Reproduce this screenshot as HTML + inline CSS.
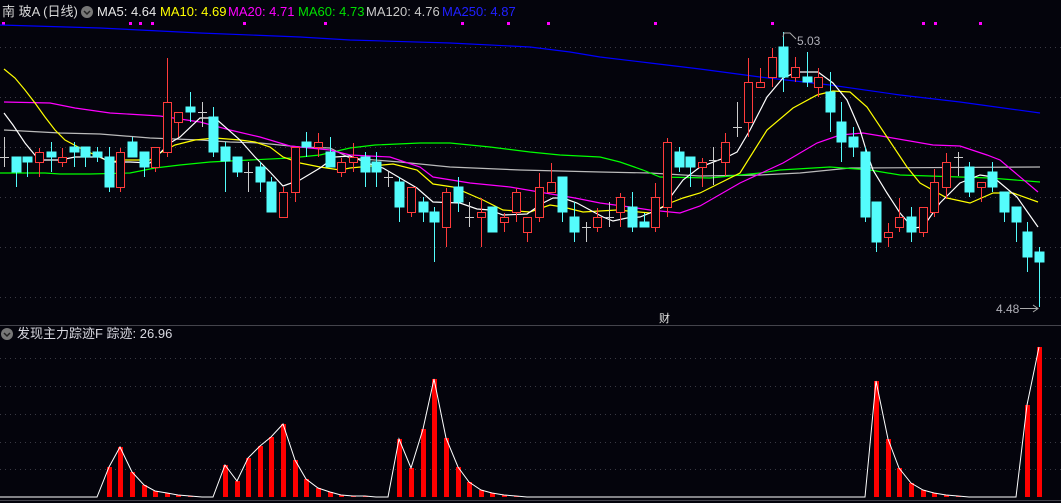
<!DOCTYPE html>
<html><head><meta charset="utf-8"><style>
html,body{margin:0;padding:0;background:#04040c;width:1061px;height:503px;overflow:hidden}
svg{display:block}
text{font-family:"Liberation Sans","Noto Sans CJK SC",sans-serif}
</style></head><body>
<svg width="1061" height="503" viewBox="0 0 1061 503" xmlns="http://www.w3.org/2000/svg">
<rect width="1061" height="503" fill="#04040c"/>
<g stroke="#3a3a44" stroke-dasharray="1,4" stroke-width="1">
<line x1="0" y1="47.5" x2="1061" y2="47.5"/><line x1="0" y1="97.5" x2="1061" y2="97.5"/><line x1="0" y1="147.5" x2="1061" y2="147.5"/><line x1="0" y1="197.5" x2="1061" y2="197.5"/><line x1="0" y1="247.5" x2="1061" y2="247.5"/><line x1="0" y1="297.5" x2="1061" y2="297.5"/>
<line x1="0" y1="358.5" x2="1061" y2="358.5"/><line x1="0" y1="386.5" x2="1061" y2="386.5"/><line x1="0" y1="414.5" x2="1061" y2="414.5"/><line x1="0" y1="442.5" x2="1061" y2="442.5"/><line x1="0" y1="469.5" x2="1061" y2="469.5"/>
</g>
<line x1="0" y1="325.5" x2="1061" y2="325.5" stroke="#44444c"/>
<line x1="0" y1="500.5" x2="1061" y2="500.5" stroke="#44444c"/>
<g fill="#ff00ff"><rect x="2" y="22" width="3" height="3"/><rect x="129" y="22" width="3" height="3"/><rect x="139" y="22" width="3" height="3"/><rect x="151" y="22" width="3" height="3"/><rect x="243" y="22" width="3" height="3"/><rect x="324" y="22" width="3" height="3"/><rect x="461" y="22" width="3" height="3"/><rect x="507" y="22" width="3" height="3"/><rect x="547" y="22" width="3" height="3"/><rect x="654" y="22" width="3" height="3"/><rect x="771" y="22" width="3" height="3"/><rect x="922" y="22" width="3" height="3"/><rect x="934" y="22" width="3" height="3"/><rect x="979" y="22" width="3" height="3"/></g>
<g fill="none" stroke-width="1.2">
<polyline stroke="#0000ff" points="0,25 100,28 200,33 300,37 350,40 450,43 530,47 570,52 600,57 650,63 700,69 760,77 830,85 900,95 960,102 1040,113"/>
<polyline stroke="#bbbbbb" points="4,130 60,133 100,134 150,138 200,140 230,142 260,143 300,147 330,148 350,158 400,162 450,167 520,170 600,172 650,173 700,176 760,175 800,173 850,168 1040,167"/>
<polyline stroke="#00ff00" points="0,173 45,173 60,174 90,174 130,173 155,168 180,165 210,162 250,160 290,158 320,155 350,148 375,145 420,143 450,143 490,147 530,152 560,155 600,157 620,162 643,170 660,177 710,178 760,173 780,170 830,167 870,170 900,175 960,177 990,178 1040,182"/>
<polyline stroke="#ff00ff" points="4,102 50,103 75,108 110,113 160,116 200,122 230,130 260,137 290,146 330,150 350,155 390,157 420,167 433,177 470,183 510,187 545,193 575,198 600,203 630,207 650,210 680,213 700,206 740,183 783,163 817,143 840,135 863,133 887,137 933,145 960,146 987,155 1000,160 1038,192"/>
<polyline stroke="#ffff00" points="4,69 15,78 25,90 35,103 45,117 55,130 65,140 80,148 95,155 110,162 125,160 150,160 160,153 175,145 195,140 215,138 240,140 255,142 270,147 283,157 300,163 320,167 340,170 350,168 393,164 417,170 433,184 453,187 483,200 503,210 530,212 550,205 563,207 583,212 617,210 650,213 670,203 683,198 700,193 740,173 767,130 793,108 817,95 833,91 850,92 867,107 887,137 907,167 920,183 947,198 970,203 993,193 1013,193 1038,202"/>
<polyline stroke="#ffffff" points="4,113 13,125 25,143 39,160 60,160 75,157 100,157 110,162 130,162 150,163 160,153 170,143 180,137 200,118 215,118 240,140 255,157 270,172 283,186 300,180 320,168 335,157 350,156 367,163 383,168 400,178 417,188 433,202 460,203 477,209 490,210 503,215 527,214 543,203 553,198 563,198 577,203 590,210 603,217 613,221 627,218 640,217 650,213 663,207 683,180 700,167 727,157 737,152 750,130 767,97 783,78 797,72 818,72 833,83 847,100 860,130 867,153 873,170 887,193 900,213 913,228 923,227 940,203 960,183 980,175 993,177 1017,197 1038,227"/>
</g>
<g stroke-width="1">
<g stroke="#cccccc"><line x1="4.5" y1="137" x2="4.5" y2="167"/><line x1="0" y1="157.5" x2="9" y2="157.5"/><line x1="202.5" y1="102" x2="202.5" y2="127"/><line x1="198" y1="112.5" x2="207" y2="112.5"/><line x1="248.5" y1="162" x2="248.5" y2="192"/><line x1="244" y1="172.5" x2="253" y2="172.5"/><line x1="388.5" y1="172" x2="388.5" y2="187"/><line x1="384" y1="177.5" x2="393" y2="177.5"/><line x1="469.5" y1="202" x2="469.5" y2="227"/><line x1="465" y1="217.5" x2="474" y2="217.5"/><line x1="586.5" y1="222" x2="586.5" y2="242"/><line x1="582" y1="227.5" x2="591" y2="227.5"/><line x1="609.5" y1="202" x2="609.5" y2="227"/><line x1="605" y1="217.5" x2="614" y2="217.5"/><line x1="713.5" y1="147" x2="713.5" y2="185"/><line x1="709" y1="160.5" x2="718" y2="160.5"/><line x1="737.5" y1="102" x2="737.5" y2="137"/><line x1="733" y1="127.5" x2="742" y2="127.5"/><line x1="958.5" y1="152" x2="958.5" y2="176"/><line x1="954" y1="157.5" x2="963" y2="157.5"/></g>
<g stroke="#54fcfc" fill="#54fcfc">
<line x1="16.5" y1="157" x2="16.5" y2="187"/><rect x="12" y="157" width="9" height="15"/>
<line x1="27.5" y1="157" x2="27.5" y2="177"/><rect x="23" y="157" width="9" height="5"/>
<line x1="51.5" y1="142" x2="51.5" y2="172"/><rect x="47" y="152" width="9" height="5"/>
<line x1="74.5" y1="142" x2="74.5" y2="167"/><rect x="70" y="147" width="9" height="5"/>
<line x1="85.5" y1="147" x2="85.5" y2="167"/><rect x="81" y="147" width="9" height="10"/>
<line x1="97.5" y1="147" x2="97.5" y2="162"/><rect x="93" y="152" width="9" height="5"/>
<line x1="109.5" y1="147" x2="109.5" y2="192"/><rect x="105" y="157" width="9" height="30"/>
<line x1="132.5" y1="137" x2="132.5" y2="157"/><rect x="128" y="142" width="9" height="15"/>
<line x1="144.5" y1="152" x2="144.5" y2="177"/><rect x="140" y="152" width="9" height="15"/>
<line x1="190.5" y1="92" x2="190.5" y2="122"/><rect x="186" y="107" width="9" height="5"/>
<line x1="213.5" y1="107" x2="213.5" y2="157"/><rect x="209" y="117" width="9" height="35"/>
<line x1="225.5" y1="142" x2="225.5" y2="192"/><rect x="221" y="147" width="9" height="14"/>
<line x1="237.5" y1="157" x2="237.5" y2="177"/><rect x="233" y="157" width="9" height="15"/>
<line x1="260.5" y1="162" x2="260.5" y2="192"/><rect x="256" y="167" width="9" height="15"/>
<line x1="271.5" y1="177" x2="271.5" y2="212"/><rect x="267" y="182" width="9" height="30"/>
<line x1="306.5" y1="132" x2="306.5" y2="157"/><rect x="302" y="142" width="9" height="5"/>
<line x1="330.5" y1="137" x2="330.5" y2="167"/><rect x="326" y="152" width="9" height="15"/>
<line x1="365.5" y1="152" x2="365.5" y2="187"/><rect x="361" y="157" width="9" height="15"/>
<line x1="376.5" y1="152" x2="376.5" y2="187"/><rect x="372" y="162" width="9" height="10"/>
<line x1="399.5" y1="177" x2="399.5" y2="222"/><rect x="395" y="182" width="9" height="25"/>
<line x1="423.5" y1="197" x2="423.5" y2="222"/><rect x="419" y="202" width="9" height="10"/>
<line x1="434.5" y1="207" x2="434.5" y2="262"/><rect x="430" y="212" width="9" height="10"/>
<line x1="458.5" y1="177" x2="458.5" y2="212"/><rect x="454" y="187" width="9" height="15"/>
<line x1="492.5" y1="207" x2="492.5" y2="232"/><rect x="488" y="207" width="9" height="25"/>
<line x1="562.5" y1="177" x2="562.5" y2="222"/><rect x="558" y="177" width="9" height="35"/>
<line x1="574.5" y1="202" x2="574.5" y2="242"/><rect x="570" y="217" width="9" height="15"/>
<line x1="632.5" y1="192" x2="632.5" y2="232"/><rect x="628" y="207" width="9" height="20"/>
<line x1="644.5" y1="213" x2="644.5" y2="227"/><rect x="640" y="222" width="9" height="5"/>
<line x1="679.5" y1="147" x2="679.5" y2="172"/><rect x="675" y="152" width="9" height="15"/>
<line x1="690.5" y1="157" x2="690.5" y2="187"/><rect x="686" y="157" width="9" height="10"/>
<line x1="783.5" y1="32" x2="783.5" y2="92"/><rect x="779" y="47" width="9" height="30"/>
<line x1="807.5" y1="52" x2="807.5" y2="87"/><rect x="803" y="77" width="9" height="5"/>
<line x1="830.5" y1="72" x2="830.5" y2="132"/><rect x="826" y="92" width="9" height="20"/>
<line x1="841.5" y1="102" x2="841.5" y2="162"/><rect x="837" y="122" width="9" height="20"/>
<line x1="853.5" y1="127" x2="853.5" y2="157"/><rect x="849" y="137" width="9" height="10"/>
<line x1="865.5" y1="147" x2="865.5" y2="222"/><rect x="861" y="152" width="9" height="65"/>
<line x1="876.5" y1="202" x2="876.5" y2="252"/><rect x="872" y="202" width="9" height="40"/>
<line x1="911.5" y1="207" x2="911.5" y2="242"/><rect x="907" y="217" width="9" height="15"/>
<line x1="969.5" y1="162" x2="969.5" y2="197"/><rect x="965" y="167" width="9" height="25"/>
<line x1="992.5" y1="162" x2="992.5" y2="192"/><rect x="988" y="172" width="9" height="15"/>
<line x1="1004.5" y1="192" x2="1004.5" y2="222"/><rect x="1000" y="192" width="9" height="20"/>
<line x1="1016.5" y1="207" x2="1016.5" y2="242"/><rect x="1012" y="207" width="9" height="15"/>
<line x1="1027.5" y1="222" x2="1027.5" y2="272"/><rect x="1023" y="232" width="9" height="25"/>
<line x1="1039.5" y1="247" x2="1039.5" y2="307"/><rect x="1035" y="252" width="9" height="10"/>
</g>
<g stroke="#ff3b3b" fill="#04040c">
<line x1="39.5" y1="148" x2="39.5" y2="177"/><rect x="35.5" y="152.5" width="8" height="10"/>
<line x1="62.5" y1="148" x2="62.5" y2="167"/><rect x="58.5" y="157.5" width="8" height="5"/>
<line x1="120.5" y1="148" x2="120.5" y2="192"/><rect x="116.5" y="152.5" width="8" height="35"/>
<line x1="155.5" y1="147" x2="155.5" y2="172"/><rect x="151.5" y="147.5" width="8" height="20"/>
<line x1="167.5" y1="58" x2="167.5" y2="157"/><rect x="163.5" y="102.5" width="8" height="50"/>
<line x1="178.5" y1="112" x2="178.5" y2="137"/><rect x="174.5" y="112.5" width="8" height="10"/>
<line x1="283.5" y1="187" x2="283.5" y2="218"/><rect x="279.5" y="192.5" width="8" height="25"/>
<line x1="295.5" y1="147" x2="295.5" y2="202"/><rect x="291.5" y="147.5" width="8" height="45"/>
<line x1="318.5" y1="133" x2="318.5" y2="157"/><rect x="314.5" y="142.5" width="8" height="5"/>
<line x1="341.5" y1="158" x2="341.5" y2="177"/><rect x="337.5" y="162.5" width="8" height="10"/>
<line x1="353.5" y1="143" x2="353.5" y2="172"/><rect x="349.5" y="157.5" width="8" height="5"/>
<line x1="411.5" y1="187" x2="411.5" y2="217"/><rect x="407.5" y="187.5" width="8" height="25"/>
<line x1="446.5" y1="188" x2="446.5" y2="247"/><rect x="442.5" y="192.5" width="8" height="35"/>
<line x1="481.5" y1="198" x2="481.5" y2="247"/><rect x="477.5" y="212.5" width="8" height="5"/>
<line x1="504.5" y1="213" x2="504.5" y2="232"/><rect x="500.5" y="217.5" width="8" height="5"/>
<line x1="516.5" y1="188" x2="516.5" y2="222"/><rect x="512.5" y="192.5" width="8" height="20"/>
<line x1="527.5" y1="217" x2="527.5" y2="242"/><rect x="523.5" y="217.5" width="8" height="15"/>
<line x1="539.5" y1="173" x2="539.5" y2="222"/><rect x="535.5" y="187.5" width="8" height="30"/>
<line x1="551.5" y1="163" x2="551.5" y2="193"/><rect x="547.5" y="182.5" width="8" height="10"/>
<line x1="597.5" y1="208" x2="597.5" y2="232"/><rect x="593.5" y="217.5" width="8" height="10"/>
<line x1="620.5" y1="193" x2="620.5" y2="227"/><rect x="616.5" y="197.5" width="8" height="15"/>
<line x1="655.5" y1="183" x2="655.5" y2="232"/><rect x="651.5" y="197.5" width="8" height="30"/>
<line x1="667.5" y1="138" x2="667.5" y2="217"/><rect x="663.5" y="142.5" width="8" height="65"/>
<line x1="702.5" y1="158" x2="702.5" y2="187"/><rect x="698.5" y="162.5" width="8" height="5"/>
<line x1="725.5" y1="133" x2="725.5" y2="176"/><rect x="721.5" y="142.5" width="8" height="20"/>
<line x1="748.5" y1="58" x2="748.5" y2="137"/><rect x="744.5" y="82.5" width="8" height="40"/>
<line x1="760.5" y1="68" x2="760.5" y2="88"/><rect x="756.5" y="82.5" width="8" height="5"/>
<line x1="772.5" y1="48" x2="772.5" y2="87"/><rect x="768.5" y="57.5" width="8" height="20"/>
<line x1="795.5" y1="57" x2="795.5" y2="82"/><rect x="791.5" y="67.5" width="8" height="10"/>
<line x1="818.5" y1="68" x2="818.5" y2="97"/><rect x="814.5" y="77.5" width="8" height="10"/>
<line x1="888.5" y1="223" x2="888.5" y2="247"/><rect x="884.5" y="232.5" width="8" height="5"/>
<line x1="899.5" y1="198" x2="899.5" y2="232"/><rect x="895.5" y="217.5" width="8" height="10"/>
<line x1="923.5" y1="207" x2="923.5" y2="237"/><rect x="919.5" y="207.5" width="8" height="25"/>
<line x1="934.5" y1="169" x2="934.5" y2="217"/><rect x="930.5" y="182.5" width="8" height="30"/>
<line x1="946.5" y1="153" x2="946.5" y2="199"/><rect x="942.5" y="162.5" width="8" height="25"/>
<line x1="981.5" y1="182" x2="981.5" y2="202"/><rect x="977.5" y="182.5" width="8" height="5"/>
</g>
</g>
<g stroke="#aaaaaa" fill="none"><polyline points="783,37 784,33 790,33 796,39"/><line x1="1020" y1="308.5" x2="1038" y2="308.5"/><polyline points="1033,305 1038,308.5 1033,312"/></g>
<text x="797" y="45" fill="#b0b0b8" font-size="12">5.03</text>
<text x="996" y="313" fill="#b0b0b8" font-size="12">4.48</text>
<text x="659" y="322" fill="#e0e0e0" font-size="11">财</text>
<g font-size="13">
<text x="2" y="16" fill="#d8d8d8">南 玻A (日线)</text>
<circle cx="87" cy="12" r="6" fill="#777"/><polyline points="84,11 87,14 90,11" stroke="#222" stroke-width="1.5" fill="none"/>
<text x="97" y="16" fill="#e8e8e8">MA5: 4.64</text>
<text x="160" y="16" fill="#ffff00">MA10: 4.69</text>
<text x="228" y="16" fill="#ff00ff">MA20: 4.71</text>
<text x="298" y="16" fill="#00e000">MA60: 4.73</text>
<text x="366" y="16" fill="#c8c8c8">MA120: 4.76</text>
<text x="442" y="16" fill="#2020ff">MA250: 4.87</text>
<circle cx="7" cy="334" r="6" fill="#777"/><polyline points="4,333 7,336 10,333" stroke="#222" stroke-width="1.5" fill="none"/>
<text x="17" y="338" fill="#d8d8e0">发现主力踪迹F  踪迹: 26.96</text>
</g>
<g fill="#ff0000">
<rect x="107" y="467" width="5" height="30"/><rect x="118" y="447" width="5" height="50"/><rect x="130" y="472" width="5" height="25"/><rect x="142" y="485" width="5" height="12"/><rect x="153" y="491" width="5" height="6"/><rect x="165" y="493" width="5" height="4"/><rect x="176" y="495" width="5" height="2"/><rect x="188" y="496" width="5" height="1"/>
<rect x="223" y="465" width="5" height="32"/><rect x="235" y="481" width="5" height="16"/><rect x="246" y="458" width="5" height="39"/><rect x="258" y="446" width="5" height="51"/><rect x="269" y="437" width="5" height="60"/><rect x="281" y="424" width="5" height="73"/><rect x="293" y="460" width="5" height="37"/><rect x="304" y="479" width="5" height="18"/><rect x="316" y="488" width="5" height="9"/><rect x="328" y="492" width="5" height="5"/><rect x="339" y="495" width="5" height="2"/><rect x="351" y="496" width="5" height="1"/><rect x="363" y="496" width="5" height="1"/>
<rect x="397" y="439" width="5" height="58"/><rect x="409" y="468" width="5" height="29"/><rect x="421" y="429" width="5" height="68"/><rect x="432" y="379" width="5" height="118"/><rect x="444" y="438" width="5" height="59"/><rect x="456" y="467" width="5" height="30"/><rect x="467" y="482" width="5" height="15"/><rect x="479" y="490" width="5" height="7"/><rect x="490" y="493" width="5" height="4"/><rect x="502" y="495" width="5" height="2"/><rect x="514" y="496" width="5" height="1"/>
<rect x="874" y="381" width="5" height="116"/><rect x="886" y="439" width="5" height="58"/><rect x="897" y="468" width="5" height="29"/><rect x="909" y="483" width="5" height="14"/><rect x="921" y="490" width="5" height="7"/><rect x="932" y="493" width="5" height="4"/><rect x="944" y="495" width="5" height="2"/><rect x="956" y="496" width="5" height="1"/>
<rect x="1025" y="405" width="5" height="92"/><rect x="1037" y="347" width="5" height="150"/>
</g>
<polyline fill="none" stroke="#ffffff" stroke-width="1" points="0,497 97,497 109,467 120,447 132,472 144,485 155,491 167,493 178,495 190,496 202,497 213,497 225,465 237,481 248,458 260,446 271,437 283,424 295,460 306,479 318,488 330,492 341,495 353,496 365,496 376,497 388,497 399,439 411,468 423,429 434,379 446,438 458,467 469,482 481,490 492,493 504,495 516,496 527,497 865,497 876,381 888,439 899,468 911,483 923,490 934,493 946,495 958,496 969,497 1016,497 1027,405 1039,347"/>
</svg>
</body></html>
